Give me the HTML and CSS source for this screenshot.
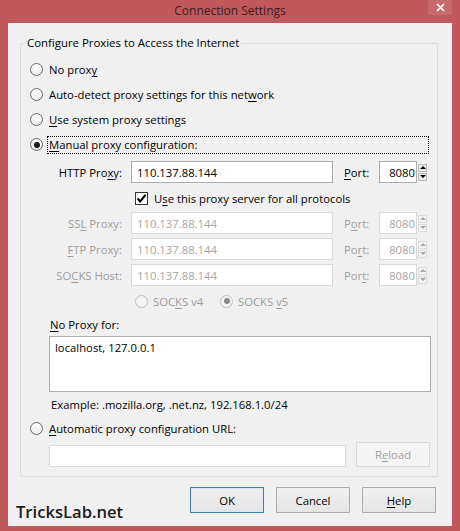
FILE: index.html
```html
<!DOCTYPE html>
<html lang="en">
<head>
<meta charset="utf-8">
<title>Connection Settings</title>
<link rel="stylesheet" href="styles.css">
</head>
<body>
<div class="window">
  <div class="titlebar">
    <span class="title">Connection Settings</span>
    <span class="close">
      <svg width="9" height="9" viewBox="0 0 9 9"><path d="M1 1L8 8M8 1L1 8" stroke="#fff" stroke-width="1.6" fill="none"/></svg>
    </span>
  </div>

  <div class="client">
    <fieldset class="group">
      <legend>Configure Proxies to Access the Internet</legend>
      <div class="gbody">
        <div class="opt"><span class="radio"></span><span>No prox<u>y</u></span></div>
        <div class="opt"><span class="radio"></span><span>Auto-detect proxy settings for this net<u>w</u>ork</span></div>
        <div class="opt"><span class="radio"></span><span><u>U</u>se system proxy settings</span></div>
        <div class="opt"><span class="radio on"></span><span class="focusbox"><u>M</u>anual proxy configuration:</span></div>

        <div class="manual">
          <div class="frow first">
            <span class="flabel">HTTP Pro<u>x</u>y:</span>
            <span class="tinput">110.137.88.144</span>
            <span class="plabel"><u>P</u>ort:</span>
            <span class="tinput port">8080</span>
            <span class="spin"><i class="up"></i><i class="down"></i></span>
          </div>
          <div class="crow">
            <span class="check"><svg width="11" height="11" viewBox="0 0 11 11"><path d="M1.5 5.5L4.2 8.3L9.5 1.8" stroke="#000" stroke-width="2.1" fill="none"/></svg></span>
            <span>U<u>s</u>e this proxy server for all protocols</span>
          </div>
          <div class="frow dis ssl">
            <span class="flabel">SS<u>L</u> Proxy:</span>
            <span class="tinput">110.137.88.144</span>
            <span class="plabel">P<u>o</u>rt:</span>
            <span class="tinput port">8080</span>
            <span class="spin"><i class="up"></i><i class="down"></i></span>
          </div>
          <div class="frow dis">
            <span class="flabel"><u>F</u>TP Proxy:</span>
            <span class="tinput">110.137.88.144</span>
            <span class="plabel">Po<u>r</u>t:</span>
            <span class="tinput port">8080</span>
            <span class="spin"><i class="up"></i><i class="down"></i></span>
          </div>
          <div class="frow dis">
            <span class="flabel">SO<u>C</u>KS Host:</span>
            <span class="tinput">110.137.88.144</span>
            <span class="plabel">Por<u>t</u>:</span>
            <span class="tinput port">8080</span>
            <span class="spin"><i class="up"></i><i class="down"></i></span>
          </div>
          <div class="vrow">
            <span class="vopt v4"><span class="radio dis"></span><span>SOC<u>K</u>S v4</span></span>
            <span class="vopt"><span class="radio dis on"></span><span>SOCKS <u>v</u>5</span></span>
          </div>
          <div class="nplabel"><u>N</u>o Proxy for:</div>
          <div class="textarea">localhost, 127.0.0.1</div>
          <div class="example">Example: .mozilla.org, .net.nz, 192.168.1.0/24</div>
        </div>

        <div class="opt auto"><span class="radio"></span><span><u>A</u>utomatic proxy configuration URL:</span></div>
        <div class="urlrow">
          <span class="tinput url"></span>
          <span class="btn disabled">R<u>e</u>load</span>
        </div>
      </div>
    </fieldset>

    <div class="buttons">
      <span class="btn default">OK</span>
      <span class="btn">Cancel</span>
      <span class="btn"><u>H</u>elp</span>
    </div>

    <div class="stamp">TricksLab.net</div>
  </div>
</div>
</body>
</html>
```

FILE: styles.css
```css
html, body {
  margin: 0;
  padding: 0;
}

body {
  font-family: "Open Sans", "Noto Sans", sans-serif;
  font-size: 11.3px;
  color: #000;
}

u {
  text-decoration: underline;
  text-underline-offset: 2px;
}

/* window frame */
.window {
  width: 460px;
  height: 531px;
  background: #c1585b;
  display: flex;
  flex-direction: column;
}

.titlebar {
  height: 23px;
  display: grid;
  grid-template-columns: 1fr auto 1fr;
  align-items: start;
}

.title {
  grid-column: 2;
  font-size: 12px;
  line-height: 22px;
  color: #3a1c1e;
}

.close {
  grid-column: 3;
  justify-self: end;
  width: 24px;
  height: 15px;
  margin-right: 8px;
  background: #c86a6c;
  display: flex;
  align-items: center;
  justify-content: center;
}

.client {
  flex: 1;
  margin: 0 8px 5px;
  background: #f0f0f0;
  display: flex;
  flex-direction: column;
  position: relative;
}

/* group box */
.group {
  margin: 12px 14px 0 12px;
  padding: 0;
  border: 1px solid #dcdcdc;
  min-width: 0;
}

.group legend {
  margin-left: 4px;
  padding: 0 2px;
  line-height: 16px;
  font-size: 11.4px;
}

.gbody {
  padding: 6px 0 9px 9px;
}

.opt {
  height: 25px;
  display: flex;
  align-items: center;
}

.opt.auto {
  height: 22px;
  margin-top: 1px;
}

/* radio buttons */
.radio {
  width: 13px;
  height: 13px;
  box-sizing: border-box;
  border: 1px solid #6a6a6a;
  border-radius: 50%;
  background: linear-gradient(#fdfdfd, #ececec);
  margin-right: 6px;
  display: flex;
  align-items: center;
  justify-content: center;
  flex: none;
}

.radio.on::after {
  content: "";
  width: 6px;
  height: 6px;
  border-radius: 50%;
  background: #1a1a1a;
}

.radio.dis {
  border-color: #c2c2c2;
  background: #f4f4f4;
  margin-right: 5px;
}

.radio.dis.on::after {
  background: #8a8a8a;
}

.focusbox {
  flex: 1;
  margin-left: -2px;
  margin-right: 8px;
  padding-left: 1px;
  height: 16px;
  line-height: 16px;
  border: 1px dotted #000;
}

/* manual configuration block */
.manual {
  padding-left: 19px;
}

.frow {
  height: 22px;
  display: flex;
  align-items: center;
  margin-top: 4px;
}

.frow.ssl {
  margin-top: 3px;
}

.flabel {
  width: 73px;
  text-align: right;
  margin-right: 9px;
  flex: none;
}

.tinput {
  width: 202px;
  height: 22px;
  box-sizing: border-box;
  border: 1px solid #abadb3;
  background: #fff;
  padding-left: 5px;
  display: flex;
  align-items: center;
  flex: none;
}

.plabel {
  width: 35px;
  margin-left: 11px;
  flex: none;
}

.tinput.port {
  width: 38px;
  justify-content: flex-end;
  padding: 0 1px 0 0;
}

.spin {
  width: 11px;
  height: 22px;
  display: flex;
  flex-direction: column;
  justify-content: center;
  gap: 1px;
  padding-left: 1px;
  box-sizing: border-box;
}

.spin i {
  height: 8px;
  width: 9px;
  box-sizing: border-box;
  border: 1px solid #b9b9b9;
  background: #ececec;
  display: flex;
  align-items: center;
  justify-content: center;
}

.spin i::after {
  content: "";
  border-left: 3px solid transparent;
  border-right: 3px solid transparent;
}

.spin .up::after {
  border-bottom: 3px solid #000;
}

.spin .down::after {
  border-top: 3px solid #000;
}

.frow.dis {
  color: #9d9d9d;
}

.frow.dis .tinput {
  border-color: #d9d9d9;
  color: #a6a6a6;
}

.frow.dis .spin i {
  border-color: #dcdcdc;
  background: #f4f4f4;
}

.frow.dis .spin .up::after {
  border-bottom-color: #a8a8a8;
}

.frow.dis .spin .down::after {
  border-top-color: #a8a8a8;
}

/* checkbox row */
.crow {
  height: 22px;
  margin-top: 4px;
  display: flex;
  align-items: center;
}

.check {
  width: 13px;
  height: 13px;
  box-sizing: border-box;
  border: 1px solid #333;
  background: #fff;
  margin-left: 86px;
  margin-right: 6px;
  display: flex;
  align-items: center;
  justify-content: center;
}

/* SOCKS version */
.vrow {
  height: 22px;
  margin-top: 4px;
  display: flex;
  align-items: center;
  padding-left: 86px;
  color: #9d9d9d;
}

.vopt {
  display: flex;
  align-items: center;
}

.vopt.v4 {
  width: 85px;
}

.nplabel {
  height: 23px;
  line-height: 23px;
  margin-top: 1px;
  padding-left: 1px;
}

.textarea {
  width: 382px;
  height: 56px;
  box-sizing: border-box;
  border: 1px solid #abadb3;
  background: #fff;
  padding: 3px 5px;
  line-height: 16px;
}

.example {
  height: 22px;
  line-height: 22px;
  margin-top: 2px;
  padding-left: 2px;
}

.urlrow {
  height: 25px;
  margin-top: 3px;
  padding-left: 19px;
  display: flex;
  align-items: flex-end;
}

.tinput.url {
  width: 297px;
  border-color: #d9d9d9;
}

/* push buttons */
.btn {
  width: 74px;
  height: 26px;
  box-sizing: border-box;
  border: 1px solid #acacac;
  background: linear-gradient(#f0f0f0, #e5e5e5);
  display: flex;
  align-items: center;
  justify-content: center;
  flex: none;
}

.btn.disabled {
  height: 25px;
  margin-left: 10px;
  border-color: #d9d9d9;
  background: #f4f4f4;
  color: #a0a0a0;
}

.btn.default {
  border-color: #3c7fb1;
  box-shadow: inset 0 0 0 1px #dbe8f3;
}

.buttons {
  margin-top: 10px;
  padding-right: 16px;
  display: flex;
  justify-content: flex-end;
  gap: 12px;
}

/* watermark stamped over the bottom-left corner */
.stamp {
  position: absolute;
  left: 8px;
  bottom: 2px;
  font-size: 16.6px;
  font-weight: 600;
  line-height: 24px;
  color: #1c1c1c;
}
```
